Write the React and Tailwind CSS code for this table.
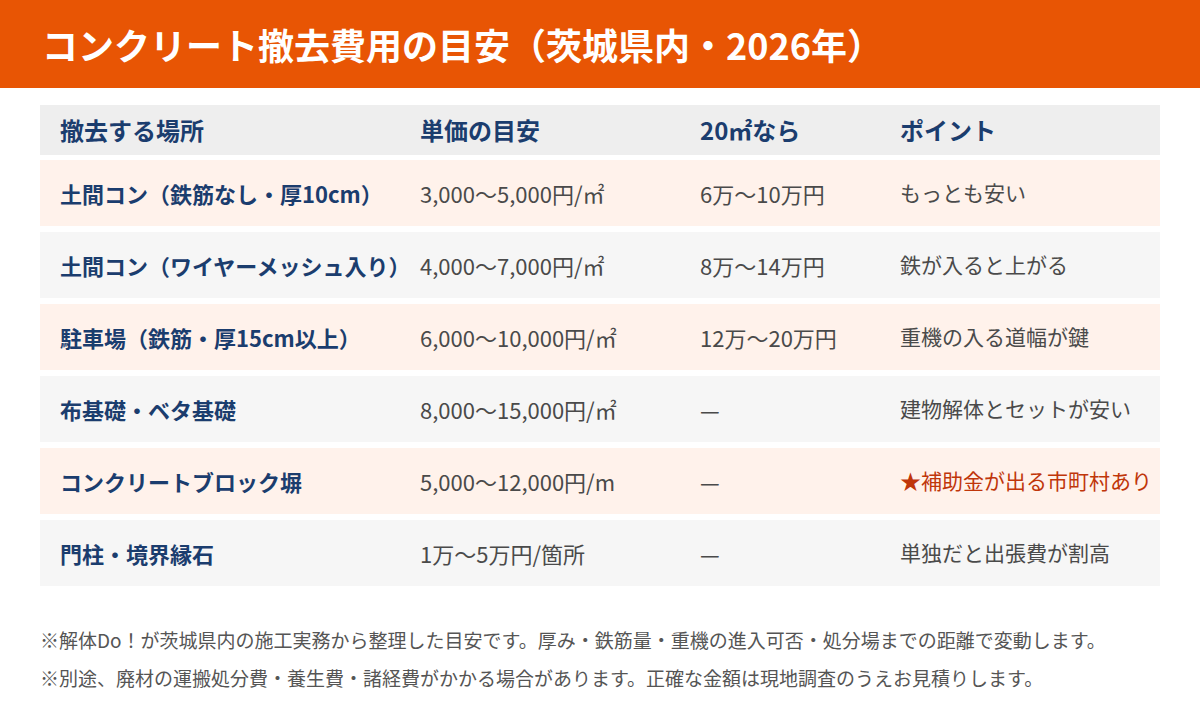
import React from "react";

const rows = [
  { place: "土間コン（鉄筋なし・厚10cm）", price: "3,000〜5,000円/㎡", per20: "6万〜10万円", point: "もっとも安い" },
  { place: "土間コン（ワイヤーメッシュ入り）", price: "4,000〜7,000円/㎡", per20: "8万〜14万円", point: "鉄が入ると上がる" },
  { place: "駐車場（鉄筋・厚15cm以上）", price: "6,000〜10,000円/㎡", per20: "12万〜20万円", point: "重機の入る道幅が鍵" },
  { place: "布基礎・ベタ基礎", price: "8,000〜15,000円/㎡", per20: "—", point: "建物解体とセットが安い" },
  { place: "コンクリートブロック塀", price: "5,000〜12,000円/m", per20: "—", point: "★補助金が出る市町村あり", red: true },
  { place: "門柱・境界縁石", price: "1万〜5万円/箇所", per20: "—", point: "単独だと出張費が割高" },
];

export default function App() {
  return (
    <div
      className="w-[1200px] h-[720px] bg-white overflow-hidden"
      style={{ fontFamily: '"Noto Sans CJK JP", "Noto Sans", sans-serif' }}
    >
      <div className="h-[88px] bg-[#e85504] flex items-center pl-[42px]">
        <h1 className="text-white font-bold text-[36px] leading-none">
          コンクリート撤去費用の目安（茨城県内・2026年）
        </h1>
      </div>

      <div className="mx-[40px] mt-[17px] flex flex-col">
        <div className="h-[50px] bg-[#eeeeee] flex items-center text-[#1b3d6e] font-bold text-[24px]">
          <div className="w-[360px] pl-[20px]">撤去する場所</div>
          <div className="w-[280px] pl-[20px]">単価の目安</div>
          <div className="w-[200px] pl-[20px]">20㎡なら</div>
          <div className="w-[280px] pl-[20px]">ポイント</div>
        </div>
        <div className="mt-[5px] flex flex-col gap-[6px]">
          {rows.map((r, i) => (
            <div
              key={i}
              className={
                "h-[66px] flex items-center " +
                (i % 2 === 0 ? "bg-[#fff2eb]" : "bg-[#f6f6f6]")
              }
            >
              <div className="w-[360px] pl-[20px] font-bold text-[22px] text-[#1b3d6e] whitespace-nowrap">{r.place}</div>
              <div className="w-[280px] pl-[20px] text-[22px] text-[#4a4a4a] whitespace-nowrap">{r.price}</div>
              <div className="w-[200px] pl-[20px] text-[22px] text-[#4a4a4a] whitespace-nowrap">{r.per20}</div>
              <div
                className={
                  "w-[280px] pl-[20px] text-[21px] whitespace-nowrap " +
                  (r.red ? "text-[#c0360a]" : "text-[#4a4a4a]")
                }
              >
                {r.point}
              </div>
            </div>
          ))}
        </div>
      </div>

      <div className="mx-[40px] mt-[35px] text-[19px] leading-[38px] text-[#555555]">
        <p>※解体Do！が茨城県内の施工実務から整理した目安です。厚み・鉄筋量・重機の進入可否・処分場までの距離で変動します。</p>
        <p>※別途、廃材の運搬処分費・養生費・諸経費がかかる場合があります。正確な金額は現地調査のうえお見積りします。</p>
      </div>
    </div>
  );
}
